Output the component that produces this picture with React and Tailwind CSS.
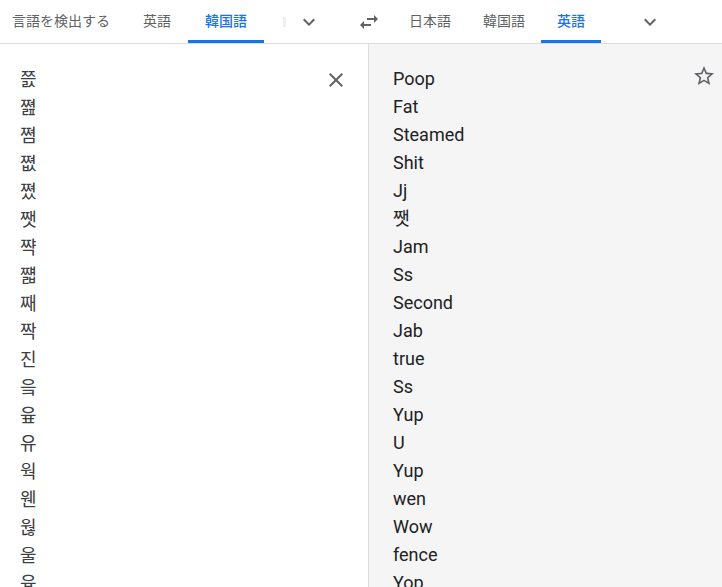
import React from 'react';

const source = ['쯠', '쪒', '쪔', '쪖', '쪘', '쨋', '쨕', '쨻', '째', '짝', '진', '읔', '윺', '유', '웍', '웬', '웒', '울', '융'];
const result = ['Poop', 'Fat', 'Steamed', 'Shit', 'Jj', '쨋', 'Jam', 'Ss', 'Second', 'Jab', 'true', 'Ss', 'Yup', 'U', 'Yup', 'wen', 'Wow', 'fence', 'Yop'];

const Tab = ({ label, active, className = '' }) => (
  <div
    className={`flex items-center border-b-[3px] pt-[3px] ${
      active ? 'border-[#1a73e8] text-[#1a73e8] font-medium' : 'border-transparent text-[#5f6368]'
    } ${className}`}
  >
    {label}
  </div>
);

const Chevron = ({ className = '' }) => (
  <svg viewBox="0 0 24 24" className={`w-6 h-6 fill-[#5f6368] ${className}`}>
    <path d="M16.59 8.59L12 13.17 7.41 8.59 6 10l6 6 6-6z" />
  </svg>
);

export default function App() {
  return (
    <div className="w-[722px] h-[587px] overflow-hidden bg-white font-['Roboto','Noto_Sans_CJK_JP',sans-serif]">
      {/* Language bar */}
      <div className="flex h-[44px] items-stretch border-b border-[#dadce0] text-[14px] font-['Roboto','Noto_Sans_CJK_JP',sans-serif]">
        <Tab label="言語を検出する" className="pl-3 pr-4" />
        <Tab label="英語" className="px-[17px]" />
        <Tab label="韓国語" active className="px-[17px]" />
        <div className="ml-[19px] w-[3px] h-[10px] self-center bg-[#eeeeee]" />
        <div className="flex items-center ml-[11px]">
          <Chevron />
        </div>
        <div className="flex items-center ml-9">
          <svg viewBox="0 0 24 24" className="w-6 h-6 fill-[#5f6368]">
            <path d="M6.99 11L3 15l3.99 4v-3H14v-2H6.99v-3zM21 9l-3.99-4v3H10v2h7.01v3L21 9z" />
          </svg>
        </div>
        <Tab label="日本語" className="ml-3 px-4" />
        <Tab label="韓国語" className="px-4" />
        <Tab label="英語" active className="px-4" />
        <div className="flex items-center ml-[37px]">
          <Chevron />
        </div>
      </div>

      {/* Panels */}
      <div className="flex h-[543px]">
        <div className="w-[369px] shrink-0 border-r border-[#dadce0] flex justify-between pl-5 pr-5 pt-5">
          <div className="flex flex-col text-[18px] leading-[28px] text-[#3c4043] font-['Noto_Sans_CJK_KR',sans-serif]">
            {source.map((s, i) => (
              <span key={i}>{s}</span>
            ))}
          </div>
          <div className="mt-1 h-6">
            <svg viewBox="0 0 24 24" className="w-6 h-6 fill-[#5f6368]">
              <path d="M19 6.41L17.59 5 12 10.59 6.41 5 5 6.41 10.59 12 5 17.59 6.41 19 12 13.41 17.59 19 19 17.59 13.41 12z" />
            </svg>
          </div>
        </div>
        <div className="flex-1 bg-[#f5f5f5] flex justify-between pl-6 pr-[6px] pt-[21px]">
          <div className="flex flex-col text-[18px] leading-[28px] text-[#202124] font-['Roboto','Noto_Sans_CJK_KR',sans-serif]">
            {result.map((s, i) => (
              <span key={i}>{s}</span>
            ))}
          </div>
          <div className="h-6 -mt-px">
            <svg viewBox="0 0 24 24" className="w-6 h-6 fill-[#5f6368]">
              <path d="M22 9.24l-7.19-.62L12 2 9.19 8.63 2 9.24l5.46 4.73L5.82 21 12 17.27 18.18 21l-1.63-7.03L22 9.24zM12 15.4l-3.76 2.27 1-4.28-3.32-2.88 4.38-.38L12 6.1l1.71 4.04 4.38.38-3.32 2.88 1 4.28L12 15.4z" />
            </svg>
          </div>
        </div>
      </div>
    </div>
  );
}
